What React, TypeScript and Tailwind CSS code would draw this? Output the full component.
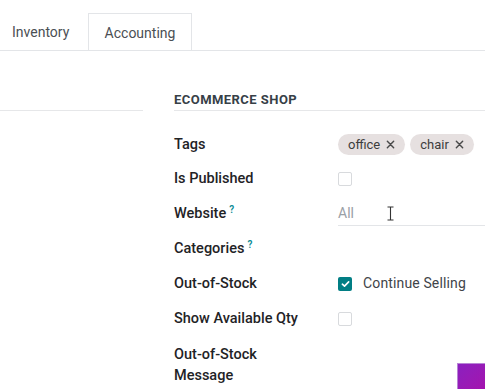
import React from "react";

const FONT = { fontFamily: "Roboto, 'Noto Sans', sans-serif" };

function Pill({ label }: { label: string }) {
  return (
    <span className="inline-flex items-center gap-[6px] h-[21px] px-[10px] rounded-full bg-[#e6e0e0] text-[13px] text-[#3d3d3d]">
      {label}
      <svg width="9" height="9" viewBox="0 0 10 10" className="text-[#4a4a4a]">
        <path d="M1.5 1.5 L8.5 8.5 M8.5 1.5 L1.5 8.5" stroke="currentColor" strokeWidth="1.6" strokeLinecap="round" />
      </svg>
    </span>
  );
}

function Row({ label, help, children }: { label: string; help?: boolean; children?: React.ReactNode }) {
  return (
    <div className="flex items-center h-[35px]">
      <div className="w-[164px] shrink-0 text-[14.5px] font-medium text-[#1f2326]">
        {label}
        {help && <sup className="ml-[3px] text-[10px] font-semibold text-[#0a8a93]">?</sup>}
      </div>
      <div className="flex-1 flex items-center">{children}</div>
    </div>
  );
}

export default function App() {
  return (
    <div className="relative w-[485px] h-[389px] overflow-hidden bg-white" style={FONT}>
      {/* tabs */}
      <div className="pt-[13px] flex border-b border-[#e3e5e8]">
        <div className="w-[88px] h-[37px] flex items-center pt-[2px] pl-[12px] text-[14px] text-[#4b4f54]">Inventory</div>
        <div className="w-[104px] h-[37px] flex items-center justify-center pt-[2px] border-x border-t border-[#e3e5e8] text-[14px] text-[#4b4f54]">
          Accounting
        </div>
      </div>

      <div className="flex">
        <div className="w-[143px] h-[60px] border-b border-[#e6e7e9]" />
        <div className="flex-1 ml-[31px]">
          <div className="h-[60px] flex items-end pb-[1px] border-b border-[#e6e7e9] text-[13px] font-bold tracking-[0.035em] text-[#374047]">
            ECOMMERCE SHOP
          </div>
          <div className="pt-[16px]">
            <Row label="Tags">
              <div className="flex gap-[5px]">
                <Pill label="office" />
                <Pill label="chair" />
              </div>
            </Row>
            <div className="-mt-[1px]" />
            <Row label="Is Published">
              <span className="w-[14px] h-[14px] border border-[#d8dadd] rounded-[2px] bg-white" />
            </Row>
            <Row label="Website" help>
              <div className="w-full h-[24px] flex items-center border-b border-[#e3e5e8] text-[14px] text-[#9aa0a6]">
                All
              </div>
            </Row>
            <Row label="Categories" help />
            <Row label="Out-of-Stock">
              <span className="w-[14px] h-[14px] rounded-[2px] bg-[#017e84] flex items-center justify-center">
                <svg width="9" height="8" viewBox="0 0 10 8">
                  <path d="M1.5 4.2 L3.9 6.4 L8.5 1.6" fill="none" stroke="white" strokeWidth="1.8" strokeLinecap="round" strokeLinejoin="round" />
                </svg>
              </span>
              <span className="ml-[11px] text-[14px] tracking-[0.01em] text-[#3f4449]">Continue Selling</span>
            </Row>
            <Row label="Show Available Qty">
              <span className="w-[14px] h-[14px] border border-[#d8dadd] rounded-[2px] bg-white" />
            </Row>
            <div className="pt-[8px] text-[14.5px] font-medium leading-[21px] text-[#1f2326]">
              Out-of-Stock
              <br />
              Message
            </div>
          </div>
        </div>
      </div>

      {/* mouse text cursor */}
      <svg className="absolute left-[386px] top-[206px]" width="9" height="15" viewBox="0 0 9 15">
        <path d="M1.5 1 H7.5 M4.5 1 V14 M1.5 14 H7.5" stroke="#333" strokeWidth="1.1" fill="none" />
      </svg>

      {/* purple overlay */}
      <div className="absolute right-0 bottom-0 w-[28px] h-[26px] bg-gradient-to-br from-[#8b1fbf] to-[#a412ae] border-l border-t border-[#b884d6]" />
    </div>
  );
}
